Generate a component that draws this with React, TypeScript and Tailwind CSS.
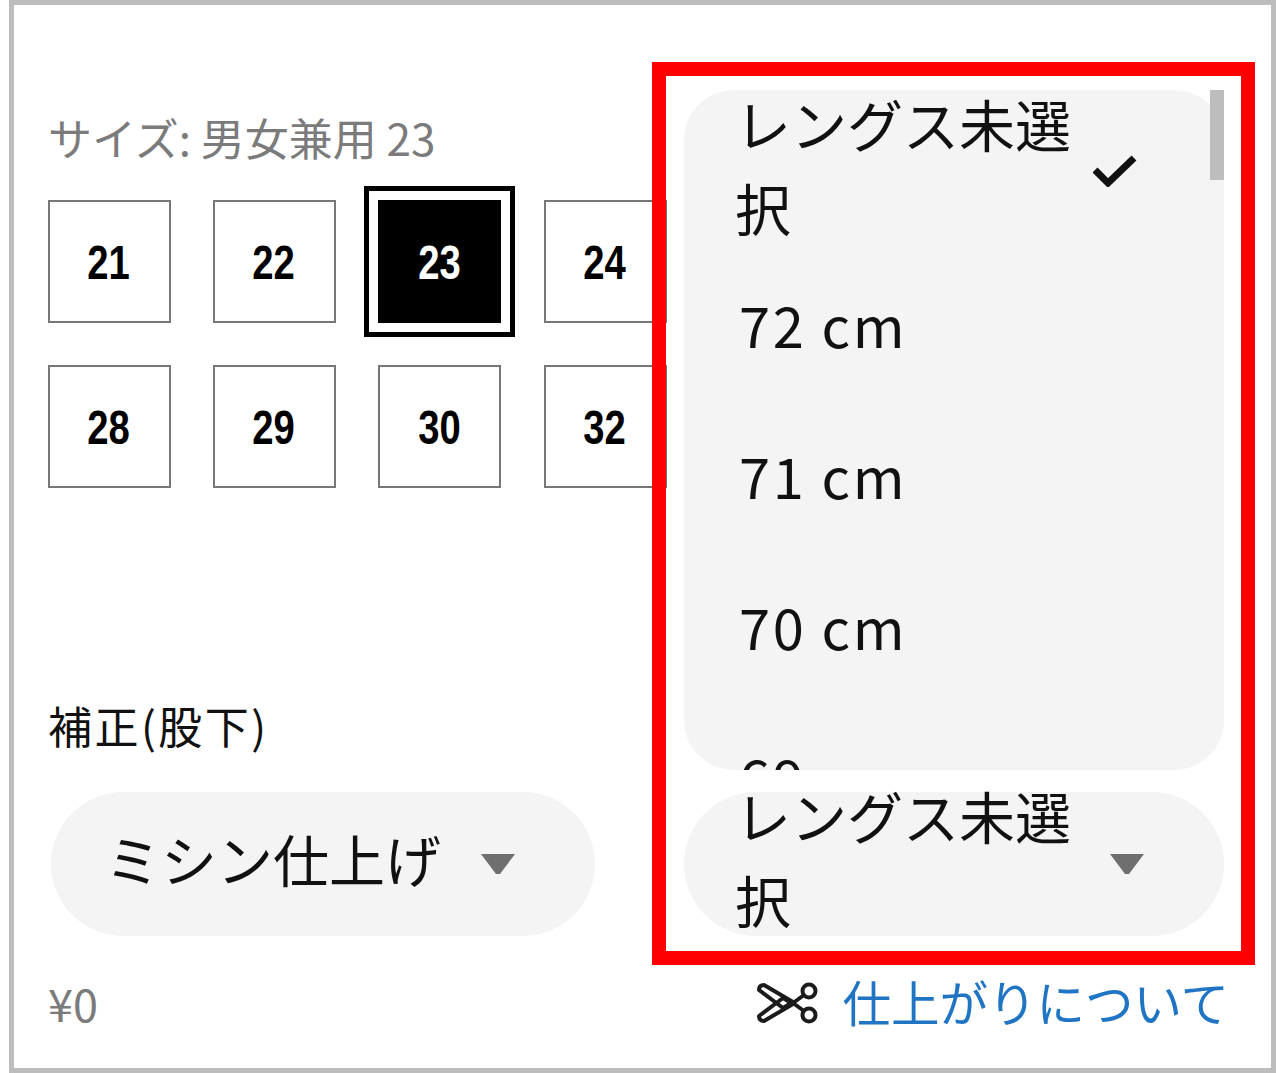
const cjk = "font-['Noto_Sans_CJK_JP','Noto_Sans',sans-serif]";

function SizeButton({ n, selected }: { n: string; selected?: boolean }) {
  const digits = (
    <span className="inline-block scale-x-[0.78] pr-[2px] pt-[1px] text-[49px] leading-none font-bold font-['Liberation_Sans',sans-serif]">{n}</span>
  );
  return (
    <div className="relative w-[123px] h-[123px]">
      {selected ? (
        <div className="absolute -inset-[14px] border-[5px] border-black bg-white p-[9px]">
          <div className="w-full h-full bg-black flex items-center justify-center text-white">{digits}</div>
        </div>
      ) : (
        <div className="w-full h-full border-2 border-[#777777] bg-white flex items-center justify-center text-black">{digits}</div>
      )}
    </div>
  );
}

function Caret() {
  return (
    <svg width="34" height="20" viewBox="0 0 34 20" className="shrink-0">
      <path d="M0 0H34L19 20H15Z" fill="#6f6f6f" />
    </svg>
  );
}

function ScissorsIcon() {
  return (
    <svg width="62" height="42" viewBox="0 0 62 42" fill="none" stroke="#1b1b1b" strokeWidth="4" strokeLinejoin="round">
      <circle cx="53" cy="9" r="6.5" />
      <circle cx="53" cy="33" r="6.5" />
      <path d="M37 21 L48 13 M37 21 L48 29" />
      <path d="M3 8 Q3 3 8 3 L37 20 L27 26 Z" />
      <path d="M3 34 Q3 39 8 39 L37 22 L27 16 Z" />
    </svg>
  );
}

export default function App() {
  const top = ["21", "22", "23", "24"];
  const bottom = ["28", "29", "30", "32"];
  return (
    <div className={`relative w-[1276px] h-[1073px] bg-white overflow-hidden ${cjk}`}>
      <div className="ml-[9px] w-[1267px] h-[1073px] border-[5px] border-[#bdbdbd] pl-[34px] pt-[104px]">
        <div className="text-[44px] leading-[56px] text-[#7b7b7b]">サイズ: 男女兼用 23</div>
        <div className="mt-[35px] grid grid-cols-[repeat(4,123px)] gap-x-[42.2px] gap-y-[42px]">
          {top.map((n) => (
            <SizeButton key={n} n={n} selected={n === "23"} />
          ))}
          {bottom.map((n) => (
            <SizeButton key={n} n={n} />
          ))}
        </div>
        <div className="mt-[209px] text-[44px] leading-[56px] text-[#111111] tracking-[2.5px]">補正(股下)</div>
        <div className="mt-[39px] flex gap-[89px] pl-[3px]">
          <div className="w-[544px] h-[144px] rounded-[72px] bg-[#f4f4f4] flex items-center pl-[54px] gap-[40px]">
            <span className="pb-[12px] text-[56px] leading-[84px] text-[#111111]">ミシン仕上げ</span>
            <Caret />
          </div>
          <div className="w-[540px] h-[144px] rounded-[72px] bg-[#f4f4f4] flex items-center pl-[51px]">
            <span className="w-[336px] pb-[14px] text-[56px] leading-[84px] text-[#111111]">レングス未選択</span>
            <span className="ml-[39px]"><Caret /></span>
          </div>
        </div>
        <div className="mt-[39px] h-[56px] flex items-center justify-between w-[1181px]">
          <span className="text-[45px] leading-[56px] text-[#7b7b7b]">¥0</span>
          <span className="flex items-center gap-[24px]">
            <ScissorsIcon />
            <span className="pb-[4px] text-[48.5px] leading-[56px] text-[#1f74c4]">仕上がりについて</span>
          </span>
        </div>
      </div>

      <div className="absolute left-[684px] top-[90px] w-[540px] h-[680px] rounded-[50px] bg-[#f4f4f4] overflow-hidden">
        <div className="flex pl-[51px] -mt-[9px]">
          <span className="w-[336px] text-[56px] leading-[84px] text-[#111111]">レングス未選択</span>
          <svg width="44" height="32" viewBox="0 0 44 32" fill="none" stroke="#111111" strokeWidth="7" className="ml-[22px] mt-[74px]">
            <path d="M2 15 L15 28 L41 3" />
          </svg>
        </div>
        <div className="pl-[55px] mt-[33px] flex flex-col gap-[68px] text-[56px] leading-[83px] tracking-[2.6px] text-[#111111]">
          <span>72 cm</span>
          <span>71 cm</span>
          <span>70 cm</span>
          <span>69 cm</span>
        </div>
      </div>
      <div className="absolute left-[1210px] top-[90px] w-[14px] h-[90px] bg-[#bdbdbd]" />

      <div className="absolute left-[652px] top-[62px] w-[603px] h-[903px] border-[14px] border-[#ff0000]" />
    </div>
  );
}
